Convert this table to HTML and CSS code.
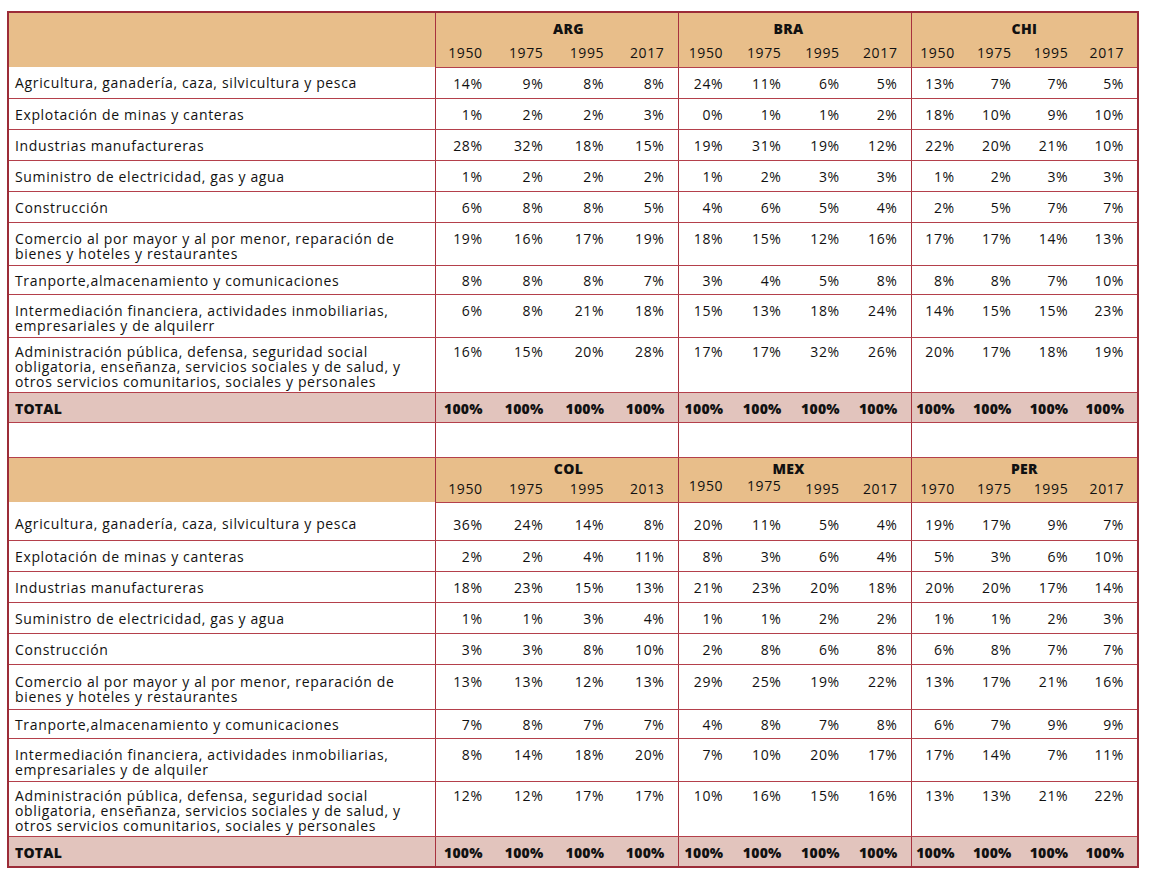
FILE: index.html
```html
<!DOCTYPE html>
<html lang="es">
<head>
<meta charset="utf-8">
<title>Estructura sectorial</title>
<link rel="stylesheet" href="styles.css">
</head>
<body>
<table class="grid">
  <colgroup>
    <col class="c-label">
    <col class="c-a"><col class="c-a"><col class="c-a"><col class="c-a">
    <col class="c-b"><col class="c-b"><col class="c-b"><col class="c-b">
    <col class="c-c"><col class="c-c"><col class="c-c"><col class="c-c">
  </colgroup>
  <tbody>
    <tr class="h1">
      <td class="lbl hd" rowspan="2"></td>
      <td class="hd cty g" colspan="4"><span class="off-a">ARG</span></td>
      <td class="hd cty g" colspan="4"><span class="off-b">BRA</span></td>
      <td class="hd cty" colspan="4">CHI</td>
    </tr>
    <tr class="h2">
      <td class="hd yr">1950</td><td class="hd yr">1975</td><td class="hd yr">1995</td><td class="hd yr g">2017</td>
      <td class="hd yr">1950</td><td class="hd yr">1975</td><td class="hd yr">1995</td><td class="hd yr g">2017</td>
      <td class="hd yr">1950</td><td class="hd yr">1975</td><td class="hd yr">1995</td><td class="hd yr">2017</td>
    </tr>
    <tr class="r1">
      <td class="lbl">Agricultura, ganadería, caza, silvicultura y pesca</td>
      <td>14%</td><td>9%</td><td>8%</td><td class="g">8%</td>
      <td>24%</td><td>11%</td><td>6%</td><td class="g">5%</td>
      <td>13%</td><td>7%</td><td>7%</td><td>5%</td>
    </tr>
    <tr class="r1">
      <td class="lbl">Explotación de minas y canteras</td>
      <td>1%</td><td>2%</td><td>2%</td><td class="g">3%</td>
      <td>0%</td><td>1%</td><td>1%</td><td class="g">2%</td>
      <td>18%</td><td>10%</td><td>9%</td><td>10%</td>
    </tr>
    <tr class="r1">
      <td class="lbl">Industrias manufactureras</td>
      <td>28%</td><td>32%</td><td>18%</td><td class="g">15%</td>
      <td>19%</td><td>31%</td><td>19%</td><td class="g">12%</td>
      <td>22%</td><td>20%</td><td>21%</td><td>10%</td>
    </tr>
    <tr class="r1">
      <td class="lbl">Suministro de electricidad, gas y agua</td>
      <td>1%</td><td>2%</td><td>2%</td><td class="g">2%</td>
      <td>1%</td><td>2%</td><td>3%</td><td class="g">3%</td>
      <td>1%</td><td>2%</td><td>3%</td><td>3%</td>
    </tr>
    <tr class="r1">
      <td class="lbl">Construcción</td>
      <td>6%</td><td>8%</td><td>8%</td><td class="g">5%</td>
      <td>4%</td><td>6%</td><td>5%</td><td class="g">4%</td>
      <td>2%</td><td>5%</td><td>7%</td><td>7%</td>
    </tr>
    <tr class="r2">
      <td class="lbl">Comercio al por mayor y al por menor, reparación de<br>bienes y hoteles y restaurantes</td>
      <td>19%</td><td>16%</td><td>17%</td><td class="g">19%</td>
      <td>18%</td><td>15%</td><td>12%</td><td class="g">16%</td>
      <td>17%</td><td>17%</td><td>14%</td><td>13%</td>
    </tr>
    <tr class="r1s">
      <td class="lbl">Tranporte,almacenamiento y comunicaciones</td>
      <td>8%</td><td>8%</td><td>8%</td><td class="g">7%</td>
      <td>3%</td><td>4%</td><td>5%</td><td class="g">8%</td>
      <td>8%</td><td>8%</td><td>7%</td><td>10%</td>
    </tr>
    <tr class="r2">
      <td class="lbl">Intermediación financiera, actividades inmobiliarias,<br>empresariales y de alquilerr</td>
      <td>6%</td><td>8%</td><td>21%</td><td class="g">18%</td>
      <td>15%</td><td>13%</td><td>18%</td><td class="g">24%</td>
      <td>14%</td><td>15%</td><td>15%</td><td>23%</td>
    </tr>
    <tr class="r3">
      <td class="lbl">Administración pública, defensa, seguridad social<br>obligatoria, enseñanza, servicios sociales y de salud, y<br>otros servicios comunitarios, sociales y personales</td>
      <td>16%</td><td>15%</td><td>20%</td><td class="g">28%</td>
      <td>17%</td><td>17%</td><td>32%</td><td class="g">26%</td>
      <td>20%</td><td>17%</td><td>18%</td><td>19%</td>
    </tr>
    <tr class="tot">
      <td class="lbl">TOTAL</td>
      <td>100%</td><td>100%</td><td>100%</td><td class="g">100%</td>
      <td>100%</td><td>100%</td><td>100%</td><td class="g">100%</td>
      <td>100%</td><td>100%</td><td>100%</td><td>100%</td>
    </tr>
    <tr class="gap">
      <td class="lbl"></td>
      <td colspan="4" class="g"></td>
      <td colspan="4" class="g"></td>
      <td colspan="4"></td>
    </tr>
    <tr class="h1b">
      <td class="lbl hd" rowspan="2"></td>
      <td class="hd cty g" colspan="4"><span class="off-a">COL</span></td>
      <td class="hd cty g" colspan="4"><span class="off-b">MEX</span></td>
      <td class="hd cty" colspan="4">PER</td>
    </tr>
    <tr class="h2b">
      <td class="hd yr">1950</td><td class="hd yr">1975</td><td class="hd yr">1995</td><td class="hd yr g">2013</td>
      <td class="hd yr up">1950</td><td class="hd yr up">1975</td><td class="hd yr">1995</td><td class="hd yr g">2017</td>
      <td class="hd yr">1970</td><td class="hd yr">1975</td><td class="hd yr">1995</td><td class="hd yr">2017</td>
    </tr>
    <tr class="r1t">
      <td class="lbl">Agricultura, ganadería, caza, silvicultura y pesca</td>
      <td>36%</td><td>24%</td><td>14%</td><td class="g">8%</td>
      <td>20%</td><td>11%</td><td>5%</td><td class="g">4%</td>
      <td>19%</td><td>17%</td><td>9%</td><td>7%</td>
    </tr>
    <tr class="r1">
      <td class="lbl">Explotación de minas y canteras</td>
      <td>2%</td><td>2%</td><td>4%</td><td class="g">11%</td>
      <td>8%</td><td>3%</td><td>6%</td><td class="g">4%</td>
      <td>5%</td><td>3%</td><td>6%</td><td>10%</td>
    </tr>
    <tr class="r1">
      <td class="lbl">Industrias manufactureras</td>
      <td>18%</td><td>23%</td><td>15%</td><td class="g">13%</td>
      <td>21%</td><td>23%</td><td>20%</td><td class="g">18%</td>
      <td>20%</td><td>20%</td><td>17%</td><td>14%</td>
    </tr>
    <tr class="r1">
      <td class="lbl">Suministro de electricidad, gas y agua</td>
      <td>1%</td><td>1%</td><td>3%</td><td class="g">4%</td>
      <td>1%</td><td>1%</td><td>2%</td><td class="g">2%</td>
      <td>1%</td><td>1%</td><td>2%</td><td>3%</td>
    </tr>
    <tr class="r1">
      <td class="lbl">Construcción</td>
      <td>3%</td><td>3%</td><td>8%</td><td class="g">10%</td>
      <td>2%</td><td>8%</td><td>6%</td><td class="g">8%</td>
      <td>6%</td><td>8%</td><td>7%</td><td>7%</td>
    </tr>
    <tr class="r2b">
      <td class="lbl">Comercio al por mayor y al por menor, reparación de<br>bienes y hoteles y restaurantes</td>
      <td>13%</td><td>13%</td><td>12%</td><td class="g">13%</td>
      <td>29%</td><td>25%</td><td>19%</td><td class="g">22%</td>
      <td>13%</td><td>17%</td><td>21%</td><td>16%</td>
    </tr>
    <tr class="r1s">
      <td class="lbl">Tranporte,almacenamiento y comunicaciones</td>
      <td>7%</td><td>8%</td><td>7%</td><td class="g">7%</td>
      <td>4%</td><td>8%</td><td>7%</td><td class="g">8%</td>
      <td>6%</td><td>7%</td><td>9%</td><td>9%</td>
    </tr>
    <tr class="r2">
      <td class="lbl">Intermediación financiera, actividades inmobiliarias,<br>empresariales y de alquiler</td>
      <td>8%</td><td>14%</td><td>18%</td><td class="g">20%</td>
      <td>7%</td><td>10%</td><td>20%</td><td class="g">17%</td>
      <td>17%</td><td>14%</td><td>7%</td><td>11%</td>
    </tr>
    <tr class="r3">
      <td class="lbl">Administración pública, defensa, seguridad social<br>obligatoria, enseñanza, servicios sociales y de salud, y<br>otros servicios comunitarios, sociales y personales</td>
      <td>12%</td><td>12%</td><td>17%</td><td class="g">17%</td>
      <td>10%</td><td>16%</td><td>15%</td><td class="g">16%</td>
      <td>13%</td><td>13%</td><td>21%</td><td>22%</td>
    </tr>
    <tr class="tot totb">
      <td class="lbl">TOTAL</td>
      <td>100%</td><td>100%</td><td>100%</td><td class="g">100%</td>
      <td>100%</td><td>100%</td><td>100%</td><td class="g">100%</td>
      <td>100%</td><td>100%</td><td>100%</td><td>100%</td>
    </tr>
  </tbody>
</table>
</body>
</html>
```

FILE: styles.css
```css
html, body {
  margin: 0;
  background: #ffffff;
}
body {
  padding: 11px 0 0 7px;
  font-family: "Open Sans", "DejaVu Sans", sans-serif;
  color: #111111;
}
.grid {
  border-collapse: collapse;
  table-layout: fixed;
  width: 1132px;
  border: 2px solid #9c2c38;
  font-size: 14px;
  font-weight: 500;
  letter-spacing: 0.65px;
  line-height: 15px;
}
.c-label { width: 427px; }
.c-a { width: 60.75px; }
.c-b { width: 58.25px; }
.c-c { width: 56.75px; }

.grid td {
  padding: 8px 13px 0 0;
  vertical-align: top;
  text-align: right;
  border-bottom: 1px solid #b4404b;
  white-space: nowrap;
}
.grid td.lbl {
  text-align: left;
  padding-left: 6px;
  padding-right: 0;
  border-right: 1px solid #a8323e;
}
.grid td.g {
  border-right: 1px solid #a8323e;
}

/* header */
.grid td.hd {
  background: #e8be8a;
}
.grid tr.h1 td, .grid tr.h1b td {
  border-bottom: none;
}
.grid td.cty {
  text-align: center;
  font-weight: 800;
  letter-spacing: 0.3px;
  padding: 0;
  vertical-align: middle;
}
.off-a { position: relative; left: 12px; }
.off-b { position: relative; left: -6px; }
.h1 { height: 28px; }
.h1 td.cty { padding-top: 4px; }
.h2 { height: 27px; }
.h2 td.yr { padding-top: 5px; }
.h1b { height: 20px; }
.h1b td.cty { padding-top: 2px; }
.h2b { height: 25px; }
.h2b td.yr { padding-top: 4px; }
.h2b td.yr.up { padding-top: 1px; }

/* body rows */
.r1 { height: 31px; }
.r1s { height: 29px; }
.r1s td { padding-top: 7px; }
.r1t { height: 38px; }
.r1t td { padding-top: 14px; }
.r2 { height: 43px; }
.r2 td { padding-top: 8px; }
.r2b { height: 45px; }
.r2b td { padding-top: 9px; }
.r3 { height: 55px; }
.r3 td { padding-top: 6px; }

.tot { height: 30px; }
.tot td {
  background: #e2c4bd;
  font-weight: 800;
  letter-spacing: 0.2px;
  padding-top: 8px;
}
.totb { height: 31px; }
.gap { height: 35px; }
.gap td { padding: 0; }
```
